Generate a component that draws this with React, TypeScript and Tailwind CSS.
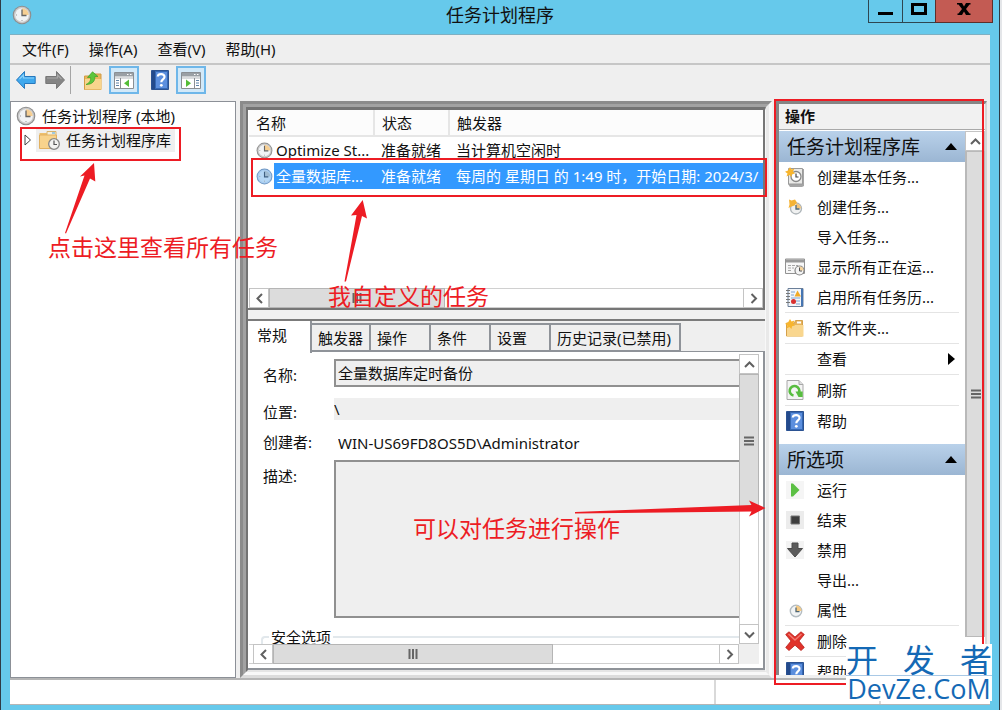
import React from 'react';
import clsx from 'clsx';

type IconProps = { className?: string };

function ClockIcon({ className = 'size-5', blue = false }: IconProps & { blue?: boolean }) {
  return (
    <svg viewBox="0 0 20 20" className={className} aria-hidden="true">
      <circle cx="10" cy="10" r="9.3" fill={blue ? '#6f97c4' : '#8e8e8e'} />
      <circle cx="10" cy="10" r="8.2" fill={blue ? '#a9cdf0' : '#c9c9c9'} />
      <circle cx="10" cy="10" r="6.8" fill={blue ? '#b5d7f5' : '#f1f3f5'} />
      <path d="M10 10V3.2A6.8 6.8 0 0 1 16.8 10Z" fill={blue ? '#9fbbd2' : '#f6cf93'} />
      <path d="M10 4.5V10.5H14.5" fill="none" stroke={blue ? '#3f5f80' : '#666'} strokeWidth="1.3" />
      <path d="M10 15v1M4 10h1" stroke="#999" strokeWidth="1" />
    </svg>
  );
}

function ArrowIcon({ className = 'size-5', right = false }: IconProps & { right?: boolean }) {
  return (
    <svg viewBox="0 0 20 20" className={className} aria-hidden="true">
      <path
        d={right ? 'M19.5 10 11.5 1.5V6.500H.8v7h10.7v5Z' : 'M.5 10 8.500 1.500V6.500h10.700v7H8.500v5Z'}
        fill={right ? '#858585' : '#3fa9ee'}
        stroke={right ? '#777' : '#2678bd'}
        strokeWidth="1"
      />
      <path
        d={right ? 'M2 8h10.500V5l4 4' : 'M18 8H7.500V5l-4 4'}
        fill="none"
        stroke={right ? '#a8a8a8' : '#8bd2fa'}
        strokeWidth="1.2"
      />
    </svg>
  );
}

function FolderUpIcon() {
  return (
    <svg viewBox="0 0 20 20" className="size-5" aria-hidden="true">
      <path d="M1.500 5h7l1.500-2h8v15.500h-16.500Z" fill="#e9b65c" stroke="#d39b45" />
      <path d="M2 8h16.500v10.500H2Z" fill="#f8d58d" />
      <path d="M3 13.500C6.500 12 8 9.500 7.500 6.500H4.500L9.500.8l5.500 4.700h-3.200c.5 4.500-2.500 8-8.800 8Z" fill="#5cc63c" stroke="#3da125" strokeWidth=".7" />
    </svg>
  );
}

function PaneIcon({ right = false }: { right?: boolean }) {
  return (
    <svg viewBox="0 0 20 17" className="h-[17px] w-5" aria-hidden="true">
      <path d="M.5.5h19v16H.500Z" fill="#fff" stroke="#8a8f94" />
      <path d="M1 1h18v3.500H1Z" fill="#9aa0a5" />
      <path d="M13 2.500h1.500M16 2.500h1.500" stroke="#fff" />
      <path d="M1 6h18" stroke="#b5b9bd" />
      {right ? (
        <>
          <path d="M13.500 6v11" stroke="#8a8f94" />
          <path d="M15 8.500h3M15 11h3M15 13.500h3" stroke="#5e83a8" />
          <path d="M5 7.500v7.500L10 11.200Z" fill="#54bd38" />
        </>
      ) : (
        <>
          <path d="M6.500 6v11" stroke="#8a8f94" />
          <path d="M2 8.500h3M2 11h3M2 13.500h3" stroke="#5e83a8" />
          <path d="M15 7.500v7.500L10 11.200Z" fill="#54bd38" />
        </>
      )}
    </svg>
  );
}

function HelpIcon() {
  return (
    <svg viewBox="0 0 18 20" className="h-5 w-[18px]" aria-hidden="true">
      <path d="M.5.500h17v19H.500Z" fill="#3568b4" stroke="#2b5292" />
      <path d="M1 1h3v18H1Z" fill="#234a8c" />
      <path d="M5 2h11v16H5Z" fill="#5c8fde" />
      <path d="M6.800 6.500C7 3.300 13.700 3 13.500 7c-.1 2.400-3.200 2.500-3.200 5.200" fill="none" stroke="#fff" strokeWidth="2.200" />
      <circle cx="10.300" cy="15.300" r="1.400" fill="#fff" />
    </svg>
  );
}

function FolderClockIcon() {
  return (
    <svg viewBox="0 0 21 19" className="h-[19px] w-[21px]" aria-hidden="true">
      <path d="M.5 2h7l1.500 2v13H.500Z" fill="#eec06c" />
      <path d="M8 .5h9v4H8Z" fill="#f4f0dd" stroke="#d9b36a" />
      <path d="M13 2h3" stroke="#4aa3df" />
      <path d="M.5 4h17v13.500H.500Z" fill="#f8d38c" stroke="#e2b160" />
      <circle cx="15" cy="13" r="5.300" fill="#f3f3f1" stroke="#868686" strokeWidth="1.300" />
      <path d="M15 9.500V13.500h3" fill="none" stroke="#555" strokeWidth="1.200" />
    </svg>
  );
}

const star = 'M5 0 6.500 2.500 9.500 1.500 8 4.500 10 6.500 7 7.200 6.500 10 4.500 8 1.500 9.500 2.500 6.500 0 4.800 3 3.500Z';

function NewBasicIcon() {
  return (
    <svg viewBox="0 0 20 20" className="size-5" aria-hidden="true">
      <path d="M4 2h15v17l-2 1H5l-2-3Z" fill="#a5a5a5" />
      <path d="M3.500 1.500h14v15.500h-14Z" fill="#e9e9e7" stroke="#9a9a9a" />
      <circle cx="11" cy="9.500" r="5" fill="#fff" stroke="#888" strokeWidth="1.300" />
      <path d="M11 6.500V10h2.500" fill="none" stroke="#444" strokeWidth="1.200" />
      <path d={star} fill="#f8b52d" />
    </svg>
  );
}

function NewTaskIcon() {
  return (
    <svg viewBox="0 0 20 20" className="size-5" aria-hidden="true">
      <circle cx="11" cy="11.500" r="5.500" fill="#f0f1f1" stroke="#adb4b8" strokeWidth="1.300" />
      <path d="M11 11.500V6.500a5 5 0 0 1 5 5Z" fill="#f5c578" />
      <path d="M11 8V12h3.500" fill="none" stroke="#4e6572" strokeWidth="1.300" />
      <path d="M4 2.500 6.500 3.500 10 2.500 12 5.500 9.500 8.500 6.500 9.500 3.500 11 4.500 7.500Z" fill="#f5b335" />
    </svg>
  );
}

function RunningIcon() {
  return (
    <svg viewBox="0 0 20 18" className="h-[18px] w-5" aria-hidden="true">
      <path d="M.5 1h19v14.500H.500Z" fill="#f7f7f7" stroke="#929292" />
      <path d="M1 1.500h18v3H1Z" fill="#999" />
      <path d="M3 7.500h3M7 7.500h3M11 7.500h2M3 10h3M7 10h2M3 12.500h3" stroke="#a5a5a5" />
      <circle cx="14.500" cy="12.500" r="4.500" fill="#f4f4f4" stroke="#858585" strokeWidth="1.200" />
      <path d="M14.500 12.500V8.500a4 4 0 0 1 4 4Z" fill="#f5d39b" />
      <path d="M14.500 9.500v3.500H17" fill="none" stroke="#555" />
    </svg>
  );
}

function HistoryIcon() {
  return (
    <svg viewBox="0 0 18 19" className="h-[19px] w-[18px]" aria-hidden="true">
      <path d="M2 .5h15v18H2Z" fill="#f3f6fa" stroke="#6b7f99" />
      <path d="M16 1v17" stroke="#4675b2" strokeWidth="2" />
      <path d="M0 2.500h4M0 5.500h4M0 8.500h4M0 11.500h4M0 14.500h4" stroke="#777" />
      <path d="M5 4h4M5 7h3M5 10h9M10 13h4M10 16h4" stroke="#7fa3d1" />
      <path d="M11.500 2.500 15 8.500H8.500Z" fill="#f2aa26" />
      <circle cx="7.500" cy="13.500" r="2.500" fill="#d93030" />
    </svg>
  );
}

function NewFolderIcon() {
  return (
    <svg viewBox="0 0 20 18" className="h-[18px] w-5" aria-hidden="true">
      <path d="M1.500 4h8l1-2.500h7V17h-16Z" fill="#e7b45b" stroke="#d4a04b" />
      <path d="M12 2.500h4v2h-4Z" fill="#fff" />
      <path d="M2 6h16.500v11.500H2Z" fill="#f9d68e" />
      <path d={star} fill="#f8b52d" />
    </svg>
  );
}

function RefreshIcon() {
  return (
    <svg viewBox="0 0 18 20" className="h-5 w-[18px]" aria-hidden="true">
      <path d="M1 .5h12l4 4v15H1Z" fill="#f4f4f4" stroke="#a8a8a8" />
      <path d="M13 .5v4h4" fill="#ddd" stroke="#a8a8a8" />
      <path d="M7.500 15.500A4.800 4.800 0 1 1 13 12.500" fill="none" stroke="#58bd40" strokeWidth="2.600" />
      <path d="M9.500 11.500h7.200v5.500H12.500Z" fill="#58bd40" />
    </svg>
  );
}

function RunIcon() {
  return (
    <svg viewBox="0 0 18 18" className="size-[18px]" aria-hidden="true">
      <path d="M0 0h18v18H0Z" fill="#f5f5f5" />
      <path d="M5 2.500v13h2L13.500 9 7 2.500Z" fill="#5cc044" />
    </svg>
  );
}

function EndIcon() {
  return (
    <svg viewBox="0 0 18 18" className="size-[18px]" aria-hidden="true">
      <path d="M0 0h18v18H0Z" fill="#ececec" />
      <path d="M5 5h8.500v8H5Z" fill="#3e3e3e" stroke="#777" />
    </svg>
  );
}

function DisableIcon() {
  return (
    <svg viewBox="0 0 18 18" className="size-[18px]" aria-hidden="true">
      <path d="M0 0h18v18H0Z" fill="#f3f3f3" />
      <path d="M6 2h6v5.500h4.500L9 16 1.500 7.500H6Z" fill="#5b5b5b" stroke="#4a4a4a" />
    </svg>
  );
}

function PropertiesIcon() {
  return (
    <svg viewBox="0 0 20 20" className="size-5" aria-hidden="true">
      <circle cx="11" cy="11" r="5.700" fill="#f2f4f5" stroke="#b3bcc2" strokeWidth="1.400" />
      <path d="M11 11V5.500a5.500 5.500 0 0 1 5.500 5.500Z" fill="#f5ca85" />
      <path d="M11 7.500V11.700h3.500" fill="none" stroke="#4e6572" strokeWidth="1.300" />
    </svg>
  );
}

function DeleteIcon() {
  return (
    <svg viewBox="0 0 20 20" className="size-5" aria-hidden="true">
      <path
        d="M4 .8 10 6 16 .8 19.300 3.500 14 10l5.300 6.500L16 19.500 10 14.200 4 19.500.7 16.500 6 10 .7 3.500Z"
        fill="#e0332b"
        stroke="#b8221d"
        strokeWidth=".8"
      />
      <path d="M3.500 3 10 9l6.500-6" fill="none" stroke="#f3786f" strokeWidth="1.500" />
    </svg>
  );
}

type Direction = 'up' | 'down' | 'left' | 'right';

const chevrons: Record<Direction, string> = {
  up: 'M1 8 5.500 3.500 10 8',
  down: 'M1 3.500 5.500 8 10 3.500',
  left: 'M8 1 3.500 5.500 8 10',
  right: 'M3.500 1 8 5.500 3.500 10',
};

function ScrollButton({ direction }: { direction: Direction }) {
  return (
    <button
      type="button"
      aria-label={`Scroll ${direction}`}
      className="flex size-5 shrink-0 items-center justify-center border border-[#c4c4c4] bg-white"
    >
      <svg viewBox="0 0 11 11" className="size-[11px]" aria-hidden="true">
        <path d={chevrons[direction]} fill="none" stroke="#606060" strokeWidth="2" />
      </svg>
    </button>
  );
}

function Grip({ vertical = false }: { vertical?: boolean }) {
  return (
    <svg viewBox="0 0 10 10" className={clsx('size-[10px]', vertical && 'rotate-90')} aria-hidden="true">
      <path d="M1.500 0v10M5 0v10M8.500 0v10" stroke="#666" strokeWidth="2" />
    </svg>
  );
}

const menus = ['文件(F)', '操作(A)', '查看(V)', '帮助(H)'];

const tasks = [
  { name: 'Optimize St...', status: '准备就绪', trigger: '当计算机空闲时' },
  { name: '全量数据库...', status: '准备就绪', trigger: '每周的 星期日 的 1:49 时，开始日期: 2024/3/', selected: true },
];

const tabs = [
  { label: '触发器', width: 'w-[59px]' },
  { label: '操作', width: 'w-[60px]' },
  { label: '条件', width: 'w-[60px]' },
  { label: '设置', width: 'w-[60px]' },
  { label: '历史记录(已禁用)', width: 'w-[130px]' },
];

type Action = { label: string; icon?: React.ReactNode; line?: boolean; submenu?: boolean };

const libraryActions: Action[] = [
  { label: '创建基本任务...', icon: <NewBasicIcon /> },
  { label: '创建任务...', icon: <NewTaskIcon /> },
  { label: '导入任务...' },
  { label: '显示所有正在运...', icon: <RunningIcon /> },
  { label: '启用所有任务历...', icon: <HistoryIcon /> },
  { label: '新文件夹...', icon: <NewFolderIcon />, line: true },
  { label: '查看', line: true, submenu: true },
  { label: '刷新', icon: <RefreshIcon />, line: true },
  { label: '帮助', icon: <HelpIcon />, line: true },
];

const itemActions: Action[] = [
  { label: '运行', icon: <RunIcon /> },
  { label: '结束', icon: <EndIcon /> },
  { label: '禁用', icon: <DisableIcon /> },
  { label: '导出...' },
  { label: '属性', icon: <PropertiesIcon /> },
  { label: '删除', icon: <DeleteIcon />, line: true },
  { label: '帮助', icon: <HelpIcon />, line: true },
];

function TitleBar() {
  return (
    <header className="grid h-[34px] shrink-0 grid-cols-[1fr_auto_1fr]">
      <div className="pt-[5px] pl-[11px]">
        <ClockIcon />
      </div>
      <h1 className="pt-[3px] text-lg leading-6">任务计划程序</h1>
      <div className="flex h-[23px] justify-end pr-1.5">
        <button type="button" aria-label="Minimize" className="flex w-[35px] justify-center border border-t-0 border-[#2e4650] pt-3">
          <span className="h-[3px] w-[15px] bg-black" />
        </button>
        <button type="button" aria-label="Maximize" className="flex w-8 justify-center border-b border-[#2e4650] pt-[3px]">
          <span className="h-3 w-4 border-[3px] border-black" />
        </button>
        <button type="button" aria-label="Close" className="flex w-[58px] justify-center border border-t-0 border-[#5c2f2b] bg-[#c35b53] pt-[3px]">
          <svg viewBox="0 0 14 12" className="h-3 w-3.5" aria-hidden="true">
            <path d="M0 0h5l2 3.500L9 0h4.500v1.500h-1L9 6l3.500 4.500h1V12H9L7 8.500 5 12H.500v-1.500h1L5 6 1.500 1.500H0Z" fill="#000" />
          </svg>
        </button>
      </div>
    </header>
  );
}

function Toolbar() {
  return (
    <div className="flex h-9 shrink-0 items-start pt-px pl-1.5">
      <button type="button" aria-label="Back" className="mt-1 mr-[9px]">
        <ArrowIcon />
      </button>
      <button type="button" aria-label="Forward" className="mt-1">
        <ArrowIcon right />
      </button>
      <span className="mr-3 ml-[5px] h-7 w-px bg-[#a5a5a5]" />
      <button type="button" aria-label="Up" className="mt-[5px] mr-1.5">
        <FolderUpIcon />
      </button>
      <button type="button" aria-label="Console tree" className="mr-3 flex h-7 w-[30px] items-center justify-center border-2 border-[#6fb7e9] bg-[#d3e9f8]">
        <PaneIcon />
      </button>
      <button type="button" aria-label="Help" className="mt-1 mr-[7px]">
        <HelpIcon />
      </button>
      <button type="button" aria-label="Action pane" className="flex h-7 w-[30px] items-center justify-center border-2 border-[#6fb7e9] bg-[#d3e9f8]">
        <PaneIcon right />
      </button>
    </div>
  );
}

function Tree() {
  return (
    <nav className="w-[226px] shrink-0 border border-[#8c9097] bg-white pt-[3px] pl-[5px]">
      <button type="button" className="flex h-[22px] items-center gap-1.5">
        <ClockIcon />
        任务计划程序 (本地)
      </button>
      <button type="button" className="flex h-[26px] items-center pl-2">
        <svg viewBox="0 0 8 12" className="mr-1 h-3 w-2" aria-hidden="true">
          <path d="M1 1v10L6.500 6Z" fill="#fff" stroke="#444" />
        </svg>
        <span className="flex h-6 items-center gap-1.5 bg-[#efefef] px-1 pl-[3px]">
          <FolderClockIcon />
          任务计划程序库
        </span>
      </button>
    </nav>
  );
}

function TaskList() {
  return (
    <section className="flex h-[200px] shrink-0 flex-col border-r-2 border-b-2 border-[#767676] bg-white pl-px">
      <table className="w-full table-fixed border-collapse text-left whitespace-nowrap">
        <thead>
          <tr className="h-[26px] bg-[#fcfcfc]">
            <th className="w-[125px] border-r-2 border-b-2 border-[#e6e6e6] py-0 pl-[7px] font-normal">名称</th>
            <th className="w-[75px] border-r-2 border-b-2 border-[#e6e6e6] py-0 pl-[7px] font-normal">状态</th>
            <th className="border-b-2 border-[#e6e6e6] py-0 pl-[7px] font-normal">触发器</th>
          </tr>
        </thead>
        <tbody>
          {tasks.map((task) => (
            <tr key={task.name} className={clsx('h-[26px]', task.selected && 'text-white')}>
              <td className="p-0">
                <div className="flex items-center pl-[7px]">
                  <ClockIcon className="mr-px size-[17px] shrink-0" blue={task.selected} />
                  <span className={clsx('h-[26px] flex-1 pl-0.5 leading-[26px]', task.selected && 'bg-[#3399ff]')}>
                    {task.name}
                  </span>
                </div>
              </td>
              <td className={clsx('py-0 pr-0 pl-[7px]', task.selected && 'bg-[#3399ff]')}>{task.status}</td>
              <td className={clsx('overflow-hidden py-0 pr-0 pl-[7px]', task.selected && 'bg-[#3399ff]')}>
                {task.trigger}
              </td>
            </tr>
          ))}
        </tbody>
      </table>
      <div className="mt-auto flex h-5 border-y border-[#d0d0d0]">
        <div className="-my-px flex flex-1">
          <ScrollButton direction="left" />
          <div className="flex w-[176px] items-center justify-center border border-[#b5b5b5] bg-[#dcdcdc]">
            <Grip />
          </div>
          <span className="flex-1" />
          <ScrollButton direction="right" />
        </div>
      </div>
    </section>
  );
}

function GeneralForm() {
  return (
    <form className="min-w-0 flex-1 overflow-hidden pt-[7px] pl-3.5">
      <div className="flex h-7">
        <label htmlFor="name" className="w-[71px] shrink-0 pt-1.5">名称:</label>
        <input
          id="name"
          readOnly
          value="全量数据库定时备份"
          className="min-w-0 flex-1 border-2 border-r-0 border-[#909090] bg-[#efefef] px-0.5"
        />
      </div>
      <div className="mt-[11px] flex h-[22px]">
        <label htmlFor="location" className="w-[71px] shrink-0 pt-1">位置:</label>
        <input id="location" readOnly value="\" className="min-w-0 flex-1 bg-[#efefef]" />
      </div>
      <div className="mt-3 flex h-[22px]">
        <label htmlFor="author" className="w-[71px] shrink-0">创建者:</label>
        <input id="author" readOnly value="WIN-US69FD8OS5D\Administrator" className="min-w-0 flex-1 px-1" />
      </div>
      <div className="mt-1.5 flex h-[158px]">
        <label htmlFor="description" className="w-[71px] shrink-0 pt-1.5">描述:</label>
        <textarea id="description" readOnly className="min-w-0 flex-1 resize-none border-2 border-r-0 border-[#909090] bg-[#efefef]" />
      </div>
      <fieldset className="mt-[9px] -ml-0.5 h-10 rounded-tl border-t-2 border-l-2 border-[#e2e8ec] pl-1.5">
        <legend className="px-0.5">安全选项</legend>
      </fieldset>
    </form>
  );
}

function Details() {
  return (
    <section className="mt-[9px] flex min-h-0 flex-1 flex-col border-t-2 border-[#7b7b7b] bg-[#efefef]">
      <div role="tablist" className="flex h-[31px] shrink-0 items-start">
        <button
          role="tab"
          type="button"
          aria-selected="true"
          className="relative z-1 h-8 w-16 border-r-2 border-[#8f9399] bg-white pb-1 pl-[9px] text-left"
        >
          常规
        </button>
        {tabs.map((tab) => (
          <button
            key={tab.label}
            role="tab"
            type="button"
            className={clsx('mt-0.5 h-[29px] border-2 border-l-0 border-[#8f9399] pl-1.5 text-left whitespace-nowrap', tab.width)}
          >
            {tab.label}
          </button>
        ))}
      </div>
      <div className="-mt-px flex min-h-0 flex-1 flex-col border-t border-r-2 border-b-2 border-[#8f9399] bg-white pr-1 pb-1 pl-px">
        <div className="flex min-h-0 flex-1">
          <GeneralForm />
          <div className="mt-0.5 flex w-5 flex-col border-x border-[#cfcfcf]">
            <div className="-mx-px flex flex-1 flex-col">
              <ScrollButton direction="up" />
              <div className="flex h-[134px] items-center justify-center border border-[#b5b5b5] bg-[#dcdcdc]">
                <Grip vertical />
              </div>
              <span className="flex-1" />
              <ScrollButton direction="down" />
            </div>
          </div>
        </div>
        <div className="flex h-5 bg-[#efefef] pr-5">
          <div className="flex flex-1 border-y border-[#cfcfcf] bg-white pl-1">
            <div className="-my-px flex flex-1">
              <ScrollButton direction="left" />
              <div className="flex w-[280px] items-center justify-center border border-[#b5b5b5] bg-[#dcdcdc]">
                <Grip />
              </div>
              <span className="flex-1" />
              <ScrollButton direction="right" />
            </div>
          </div>
        </div>
      </div>
    </section>
  );
}

function ActionGroup({ title, actions }: { title: string; actions: Action[] }) {
  return (
    <>
      <h3 className="flex h-[31px] items-center justify-between bg-linear-to-b from-[#b9d1ea] to-[#9bb6d3] pr-2 pl-2 text-[19px]">
        {title}
        <svg viewBox="0 0 12 7" className="h-[7px] w-3" aria-hidden="true">
          <path d="M0 7 6 0l6 7Z" fill="#000" />
        </svg>
      </h3>
      <ul className="px-1.5">
        {actions.map((action) => (
          <li key={action.label} className={clsx(action.line && 'border-t border-[#e4e4e4]')}>
            <button type="button" className="flex h-[30px] w-full items-center">
              <span className="mr-3 flex w-5 justify-center">{action.icon}</span>
              {action.label}
              {action.submenu && (
                <svg viewBox="0 0 7 12" className="mr-1 ml-auto h-3 w-[7px]" aria-hidden="true">
                  <path d="M0 0 7 6 0 12Z" fill="#000" />
                </svg>
              )}
            </button>
          </li>
        ))}
      </ul>
    </>
  );
}

function ActionsPane() {
  return (
    <aside className="mb-[3px] ml-1 flex w-[211px] shrink-0 flex-col overflow-hidden border-t-[3px] border-r-2 border-l-[3px] border-[#858585] border-r-[#d5d5d5] bg-white">
      <h2 className="h-[26px] shrink-0 border-b border-[#a9a9a9] bg-[#f1f1f1] pl-1.5 text-[15px] leading-[25px] font-bold">操作</h2>
      <div className="flex min-h-0 flex-1 pt-px">
        <div className="flex min-w-0 flex-1 flex-col gap-2 overflow-hidden">
          <div className="shrink-0">
            <ActionGroup title="任务计划程序库" actions={libraryActions} />
          </div>
          <div className="shrink-0">
            <ActionGroup title="所选项" actions={itemActions} />
          </div>
        </div>
        <div className="flex w-5 shrink-0 flex-col">
          <ScrollButton direction="up" />
          <div className="flex h-[486px] items-center justify-center border border-l-2 border-[#b9b9b9] bg-[#dcdcdc]">
            <Grip vertical />
          </div>
        </div>
      </div>
    </aside>
  );
}

function Notes() {
  return (
    <div className="pointer-events-none absolute inset-0 z-10 text-[23px] leading-7 whitespace-nowrap text-[#ed1c24]">
      <div className="absolute top-[127px] left-[19px] h-[34px] w-[161px] border-2 border-[#ed1c24]" />
      <div className="absolute top-[158px] right-[232px] left-[250px] h-[39px] border-2 border-[#ed1c24]" />
      <div className="absolute top-[99px] right-[15px] h-[586px] w-[210px] border-2 border-[#ed1c24]" />
      <svg className="absolute top-0 left-0 h-[600px] w-[770px]" viewBox="1 0 770 600" fill="#ed1c24" aria-hidden="true">
        <path d="M94 163 95.300 181.500 90 178.500 66 233.500 65 233 84.500 175.500 80 176.500Z" />
        <path d="M362.700 200 367 218.500 362 216 346 281.500 344.500 281.500 356.500 215 351 215.500Z" />
        <path d="M765.500 508 749 500.500 751.500 505 575 512 575 513.500 751.500 511.500 749 516.500Z" />
      </svg>
      <p className="absolute top-[233px] left-[47px]">点击这里查看所有任务</p>
      <p className="absolute top-[282px] left-[327px]">我自定义的任务</p>
      <p className="absolute top-[514px] left-[412px]">可以对任务进行操作</p>
      <div className="absolute right-[7px] bottom-[9px] w-[146px] bg-white font-['Open_Sans','Noto_Sans_CJK_SC',sans-serif] text-[#1469b5]">
        <p className="flex justify-between border-b border-[#a9c9e6] text-[32px] leading-[31px]">
          <span>开</span>
          <span>发</span>
          <span>者</span>
        </p>
        <p className="text-center text-[27px] leading-[25px]">DevZe.CoM</p>
      </div>
    </div>
  );
}

export default function App() {
  return (
    <div className="flex h-screen bg-[#e4e6e9] pr-0.5 font-['Noto_Sans','Noto_Sans_CJK_SC',sans-serif] text-[15px] leading-5 text-[#111]">
      <div className="relative flex min-w-0 flex-1 flex-col border-x border-[#2f3b45] bg-[#66c9eb] pb-[5px]">
        <TitleBar />
        <main className="mx-[9px] flex min-h-0 flex-1 flex-col border-t border-[#7fb0c2] bg-[#efefef]">
          <nav className="flex h-[30px] shrink-0 items-center gap-5 border-b-2 border-[#c6c6c6] pl-3">
            {menus.map((menu) => (
              <button key={menu} type="button">
                {menu}
              </button>
            ))}
          </nav>
          <Toolbar />
          <div className="flex min-h-0 flex-1 pr-[3px]">
            <Tree />
            <div className="ml-1 flex min-w-0 flex-1 border-t-[3px] border-r-[3px] border-b-[3px] border-l-[3px] border-[#8b8b8b] border-r-[#f8f8f8] border-b-[#dcdcdc]">
              <div className="flex min-w-0 flex-1 border-3 border-[#a2a2a2] border-r-[#e9e9e9] border-b-[#f8f8f8]">
                <div className="flex min-w-0 flex-1 flex-col border-t-3 border-r border-b-2 border-l-2 border-[#737373] border-r-[#f8f8f8] border-b-[#e5e5e5] bg-[#f1f1f1]">
                  <TaskList />
                  <Details />
                </div>
              </div>
            </div>
            <ActionsPane />
          </div>
          <footer className="flex h-[27px] shrink-0 border-t-2 border-b border-[#b5b5b5] bg-white">
            <span className="flex-1 border-r-2 border-[#d9d9d9]" />
            <span className="w-[165px] border-r-2 border-[#d9d9d9]" />
            <span className="w-[109px]" />
          </footer>
        </main>
        <Notes />
      </div>
    </div>
  );
}
